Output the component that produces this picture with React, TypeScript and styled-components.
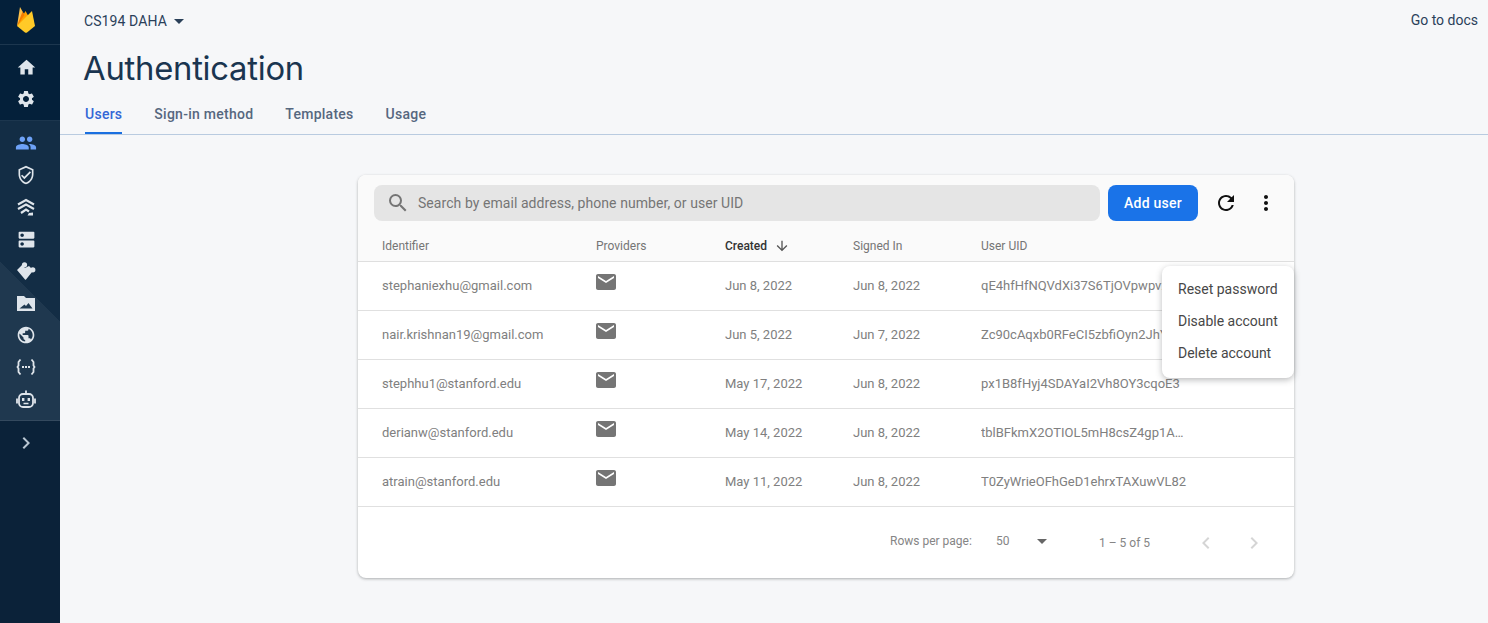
import React from "react";
import styled, { createGlobalStyle } from "styled-components";
import {
  MdHome, MdSettings, MdPeople, MdOutlineVerifiedUser, MdDns, MdPublic,
  MdChevronRight, MdChevronLeft, MdSearch, MdRefresh, MdMoreVert, MdEmail,
  MdArrowDownward, MdArrowDropDown,
} from "react-icons/md";

const Global = createGlobalStyle`
  html, body { margin: 0; padding: 0; background: #f6f7f9; overflow: hidden; }
  body { font-family: Roboto, "Liberation Sans", sans-serif; }
  * { box-sizing: border-box; }
`;

const Page = styled.div`
  display: flex;
  width: 1488px;
  height: 623px;
  background: #f6f7f9;
`;

const Sidebar = styled.aside`
  width: 60px;
  flex: none;
  display: flex;
  flex-direction: column;
  background: #0b2239;
  color: #dfe5eb;
`;

const LogoBox = styled.div`
  height: 45px;
  background: #04203a;
  border-bottom: 1px solid #1c364e;
  display: flex;
  align-items: flex-start;
  justify-content: center;
  padding: 7px 8px 0 0;
`;

const TopNav = styled.div`
  height: 76px;
  background: #04203a;
  border-bottom: 1px solid #1c364e;
  padding-top: 6px;
`;

const ProductNav = styled.div`
  height: 300px;
  padding-top: 6px;
  border-bottom: 1px solid #34495e;
  background: linear-gradient(225deg, #132d45 142px, #1f384f 142px);
`;

const SideItem = styled.div<{ $active?: boolean }>`
  height: 32px;
  padding-right: 8px;
  display: flex;
  align-items: center;
  justify-content: center;
  color: ${(p) => (p.$active ? "#6ea2f7" : "#dfe5eb")};
`;

const ExpandItem = styled(SideItem)`
  margin-top: 6px;
  color: #b9c6d2;
`;

const Main = styled.main`
  flex: 1;
  min-width: 0;
  display: flex;
  flex-direction: column;
`;

const Header = styled.header`
  height: 135px;
  border-bottom: 1px solid #b9cbe0;
  padding: 0 10px 0 24px;
`;

const TopRow = styled.div`
  height: 42px;
  display: flex;
  align-items: center;
  justify-content: space-between;
`;

const Project = styled.div`
  display: flex;
  align-items: center;
  font-size: 14px;
  letter-spacing: 0.1px;
  color: #2a4059;
`;

const Docs = styled.a`
  font-size: 14px;
  color: #2a4059;
  margin-top: -3px;
`;

const Title = styled.h1`
  margin: 1px 0 0 -1px;
  font-family: Inter, Roboto, sans-serif;
  font-weight: 400;
  font-size: 32.8px;
  line-height: 50px;
  letter-spacing: -0.25px;
  color: #1a3550;
`;

const Tabs = styled.nav`
  display: flex;
  gap: 32px;
  margin-left: 1px;
`;

const Tab = styled.div<{ $active?: boolean }>`
  height: 41px;
  padding-top: 12px;
  font-size: 14px;
  font-weight: 500;
  line-height: 18px;
  letter-spacing: 0.26px;
  color: ${(p) => (p.$active ? "#3367d6" : "#56677f")};
  border-bottom: 2px solid ${(p) => (p.$active ? "#1a6fe0" : "transparent")};
`;

const Content = styled.div`
  flex: 1;
  padding: 40px 0 0 298px;
`;

const Card = styled.section`
  position: relative;
  width: 936px;
  height: 403px;
  background: #fff;
  border-radius: 8px;
  box-shadow: 0 1px 3px rgba(60, 64, 67, 0.4);
`;

const CardHead = styled.div`
  background: #fafafa;
  border-radius: 8px 8px 0 0;
  height: 87px;
  border-bottom: 1px solid #dfdfdf;
`;

const Toolbar = styled.div`
  display: flex;
  align-items: center;
  padding: 10px 16px 0;
  height: 46px;
`;

const Search = styled.div`
  width: 726px;
  height: 36px;
  border-radius: 8px;
  background: #e5e5e5;
  display: flex;
  align-items: center;
  padding-left: 12px;
  gap: 8px;
  color: #757575;
  font-size: 14px;
  letter-spacing: 0.06px;
`;

const AddButton = styled.button`
  width: 90px;
  height: 36px;
  margin-left: 8px;
  border: 0;
  border-radius: 8px;
  background: #1a73e8;
  color: #fff;
  font: 500 14px Roboto, sans-serif;
  letter-spacing: 0.25px;
`;

const ToolIcon = styled.div<{ $w: number }>`
  width: ${(p) => p.$w}px;
  display: flex;
  justify-content: center;
  color: #111;
`;

const Grid = styled.div`
  display: grid;
  grid-template-columns: 214px 129px 128px 128px 1fr;
  padding-left: 24px;
  align-items: center;
`;

const HeadRow = styled(Grid)`
  height: 41px;
  padding-top: 9px;
  font-size: 12px;
  color: #757575;
`;

const SortCell = styled.div`
  display: flex;
  align-items: center;
  gap: 7px;
  color: #333;
  font-weight: 500;
`;

const Row = styled(Grid)`
  height: 49px;
  padding-bottom: 2px;
  border-bottom: 1px solid #e0e0e0;
  font-size: 13px;
  color: #808080;
`;

const Uid = styled.div`
  width: 206px;
  white-space: nowrap;
  overflow: hidden;
  text-overflow: ellipsis;
`;

const Mail = styled.div`
  color: #757575;
  display: flex;
  margin: -6px 0 0 -2px;
`;

const Pager = styled.div`
  display: flex;
  align-items: center;
  height: 72px;
  padding-left: 532px;
  font-size: 12px;
  color: #858585;
`;

const PerPage = styled.span`
  width: 106px;
  margin-top: -4px;
`;

const PageSize = styled.span`
  width: 34px;
  margin-top: -4px;
`;

const PageCaret = styled.span`
  width: 69px;
  display: flex;
  color: #666;
  margin-top: -4px;
`;

const Range = styled.span`
  width: 95px;
`;

const PageBtn = styled.span`
  width: 48px;
  display: flex;
  color: #d5d5d5;
`;

const Menu = styled.div`
  position: absolute;
  top: 91px;
  right: 0;
  width: 132px;
  height: 112px;
  padding: 7px 0;
  background: #fff;
  border-radius: 8px;
  box-shadow: 0 2px 6px rgba(60, 64, 67, 0.35);
`;

const MenuItem = styled.div`
  height: 32px;
  padding-left: 16px;
  line-height: 32px;
  font-size: 14px;
  color: #474747;
`;

const FlameLogo = () => (
  <svg width="18" height="26" viewBox="0 0 18 26">
    <path d="M0 19 3 0l4.500 8z" fill="#ffc24a" />
    <path d="M0 19 8.500 4l4.500 8z" fill="#ffa000" />
    <path d="M0 19 15 4l3 15-8 6.500q-1 .7-2 0z" fill="#ffca28" />
    <path d="M0 19 7.500 8l-2-3.500z" fill="#f57c00" />
  </svg>
);

const LayersIcon = () => (
  <svg width="20" height="20" viewBox="0 0 20 20" fill="none" stroke="currentColor" strokeWidth="2.200">
    <path d="M2 7.500 10 3l8 4.500" />
    <path d="M2 12 10 7.500l8 4.500" />
    <path d="M5 16 10 12.500l3 2" />
    <path d="M11.500 18.500h5.500v-3l-4 .5z" fill="currentColor" stroke="none" />
  </svg>
);

const PuzzleIcon = () => (
  <svg width="20" height="20" viewBox="0 0 20 20" fill="currentColor">
    <path d="M1 9 6 4l3 3 4-2 4 4-1 2-6 7.500q-.5.500-1 0z" />
    <circle cx="8.500" cy="3.800" r="2.600" />
    <circle cx="16.800" cy="8.800" r="2.600" />
  </svg>
);

const MediaIcon = () => (
  <svg width="20" height="20" viewBox="0 0 20 20">
    <path
      fill="currentColor"
      fillRule="evenodd"
      d="M1 3h7l2 2h9v13H1zM3.500 15.500h13l-4-5.500-2.500 3-1.500-1.500z"
    />
  </svg>
);

const BracesIcon = () => (
  <svg width="20" height="20" viewBox="0 0 20 20" fill="none" stroke="currentColor" strokeWidth="1.800">
    <path d="M4.500 2.500 2.500 5v3.500L1.500 10l1 1.500V15l2 2.500" />
    <path d="M15.500 2.500 17.500 5v3.500l1 1.500-1 1.500V15l-2 2.500" />
    <path d="M6 10h8" strokeDasharray="2 1" />
  </svg>
);

const BotIcon = () => (
  <svg width="20" height="20" viewBox="0 0 20 20" fill="none" stroke="currentColor" strokeWidth="1.800">
    <path d="M10 1.500v3.500" />
    <rect x="3" y="5" width="14" height="13" rx="4" />
    <path d="M1 9.500v5M19 9.500v5" />
    <rect x="6" y="9" width="2.400" height="3" fill="currentColor" stroke="none" />
    <rect x="11.600" y="9" width="2.400" height="3" fill="currentColor" stroke="none" />
    <path d="M7.500 14.500h5" strokeWidth="1.500" />
  </svg>
);

type User = { email: string; created: string; signedIn: string; uid: string };

const users: User[] = [
  { email: "stephaniexhu@gmail.com", created: "Jun 8, 2022", signedIn: "Jun 8, 2022", uid: "qE4hfHfNQVdXi37S6TjOVpwpvz" },
  { email: "nair.krishnan19@gmail.com", created: "Jun 5, 2022", signedIn: "Jun 7, 2022", uid: "Zc90cAqxb0RFeCI5zbfiOyn2JhY2" },
  { email: "stephhu1@stanford.edu", created: "May 17, 2022", signedIn: "Jun 8, 2022", uid: "px1B8fHyj4SDAYaI2Vh8OY3cqoE3" },
  { email: "derianw@stanford.edu", created: "May 14, 2022", signedIn: "Jun 8, 2022", uid: "tblBFkmX2OTIOL5mH8csZ4gp1A93kd" },
  { email: "atrain@stanford.edu", created: "May 11, 2022", signedIn: "Jun 8, 2022", uid: "T0ZyWrieOFhGeD1ehrxTAXuwVL82" },
];

export default function App() {
  return (
    <Page>
      <Global />
      <Sidebar>
        <LogoBox><FlameLogo /></LogoBox>
        <TopNav>
          <SideItem><MdHome size={21} /></SideItem>
          <SideItem><MdSettings size={20} /></SideItem>
        </TopNav>
        <ProductNav>
          <SideItem $active><MdPeople size={22} /></SideItem>
          <SideItem><MdOutlineVerifiedUser size={20} /></SideItem>
          <SideItem><LayersIcon /></SideItem>
          <SideItem><MdDns size={21} /></SideItem>
          <SideItem><PuzzleIcon /></SideItem>
          <SideItem><MediaIcon /></SideItem>
          <SideItem><MdPublic size={20} /></SideItem>
          <SideItem><BracesIcon /></SideItem>
          <SideItem><BotIcon /></SideItem>
        </ProductNav>
        <ExpandItem><MdChevronRight size={24} /></ExpandItem>
      </Sidebar>
      <Main>
        <Header>
          <TopRow>
            <Project>CS194 DAHA<MdArrowDropDown size={24} /></Project>
            <Docs>Go to docs</Docs>
          </TopRow>
          <Title>Authentication</Title>
          <Tabs>
            <Tab $active>Users</Tab>
            <Tab>Sign-in method</Tab>
            <Tab>Templates</Tab>
            <Tab>Usage</Tab>
          </Tabs>
        </Header>
        <Content>
          <Card>
            <CardHead>
              <Toolbar>
                <Search><MdSearch size={24} />Search by email address, phone number, or user UID</Search>
                <AddButton>Add user</AddButton>
                <ToolIcon $w={56}><MdRefresh size={24} /></ToolIcon>
                <ToolIcon $w={24}><MdMoreVert size={24} /></ToolIcon>
              </Toolbar>
              <HeadRow>
                <div>Identifier</div>
                <div>Providers</div>
                <SortCell>Created <MdArrowDownward size={16} color="#555" /></SortCell>
                <div>Signed In</div>
                <div>User UID</div>
              </HeadRow>
            </CardHead>
            {users.map((u) => (
              <Row key={u.email}>
                <div>{u.email}</div>
                <Mail><MdEmail size={24} /></Mail>
                <div>{u.created}</div>
                <div>{u.signedIn}</div>
                <Uid>{u.uid}</Uid>
              </Row>
            ))}
            <Pager>
              <PerPage>Rows per page:</PerPage>
              <PageSize>50</PageSize>
              <PageCaret><MdArrowDropDown size={24} /></PageCaret>
              <Range>1 – 5 of 5</Range>
              <PageBtn><MdChevronLeft size={24} /></PageBtn>
              <PageBtn><MdChevronRight size={24} /></PageBtn>
            </Pager>
            <Menu>
              <MenuItem>Reset password</MenuItem>
              <MenuItem>Disable account</MenuItem>
              <MenuItem>Delete account</MenuItem>
            </Menu>
          </Card>
        </Content>
      </Main>
    </Page>
  );
}
